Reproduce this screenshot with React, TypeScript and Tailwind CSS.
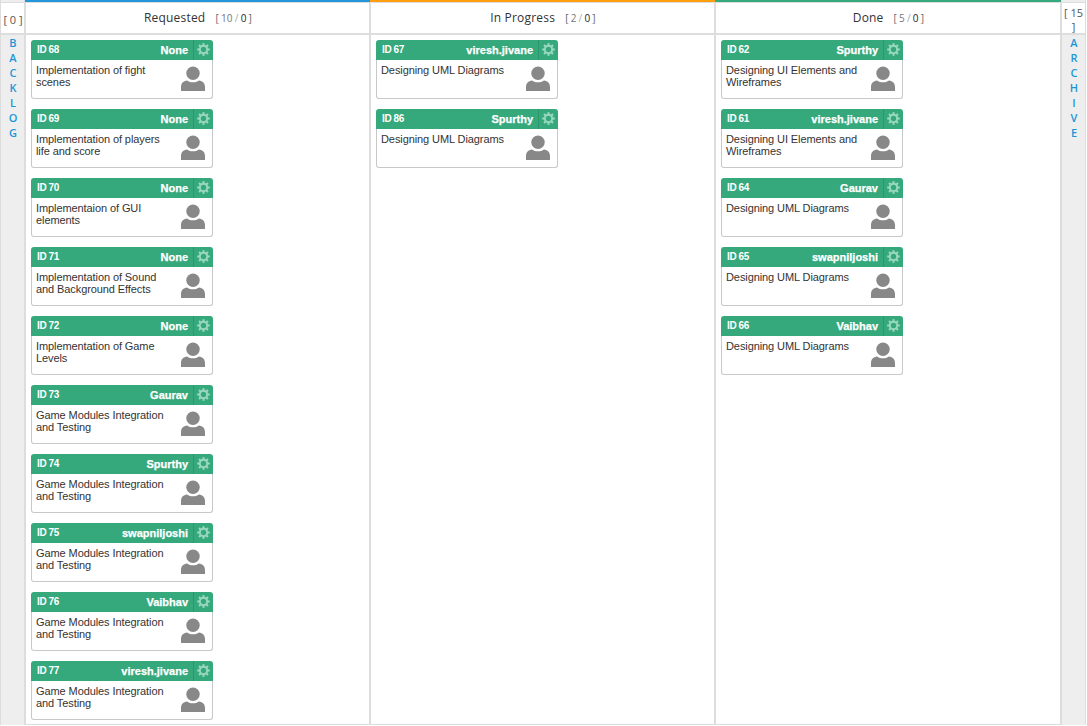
type Card = { id: number; owner: string; lines: string[] };

const testing = ["Game Modules Integration", "and Testing"];
const uml = ["Designing UML Diagrams"];
const ui = ["Designing UI Elements and", "Wireframes"];

const requested: Card[] = [
  { id: 68, owner: "None", lines: ["Implementation of fight", "scenes"] },
  { id: 69, owner: "None", lines: ["Implementation of players", "life and score"] },
  { id: 70, owner: "None", lines: ["Implementaion of GUI", "elements"] },
  { id: 71, owner: "None", lines: ["Implementation of Sound", "and Background Effects"] },
  { id: 72, owner: "None", lines: ["Implementation of Game", "Levels"] },
  { id: 73, owner: "Gaurav", lines: testing },
  { id: 74, owner: "Spurthy", lines: testing },
  { id: 75, owner: "swapniljoshi", lines: testing },
  { id: 76, owner: "Vaibhav", lines: testing },
  { id: 77, owner: "viresh.jivane", lines: testing },
];
const inProgress: Card[] = [
  { id: 67, owner: "viresh.jivane", lines: uml },
  { id: 86, owner: "Spurthy", lines: uml },
];
const done: Card[] = [
  { id: 62, owner: "Spurthy", lines: ui },
  { id: 61, owner: "viresh.jivane", lines: ui },
  { id: 64, owner: "Gaurav", lines: uml },
  { id: 65, owner: "swapniljoshi", lines: uml },
  { id: 66, owner: "Vaibhav", lines: uml },
];

const teeth = [0, 45, 90, 135, 180, 225, 270, 315];

function Gear() {
  return (
    <svg viewBox="-6.5 -6.5 13 13" className="h-[13px] w-[13px]" fill="none" stroke="#9ad8c0">
      <circle r="3.7" strokeWidth="2" />
      {teeth.map((a) => (
        <path key={a} d="M0 -4.2V-6.3" strokeWidth="2.1" transform={`rotate(${a})`} />
      ))}
    </svg>
  );
}

function Person() {
  return (
    <svg viewBox="0 0 24 26" className="mt-px h-[26px] w-6 shrink-0" fill="#888">
      <circle cx="12" cy="7.3" r="6.7" />
      <path d="M0 25V21C0 17 2.4 14.8 6 14.4C9.4 17 14.6 17 18 14.4C21.6 14.8 24 17 24 21V25Z" />
    </svg>
  );
}

function TaskCard({ card }: { card: Card }) {
  return (
    <article className="flex h-[59px] w-[182px] flex-col">
      <header className="flex h-5 shrink-0 rounded-t-[3px] bg-[#35a87c] font-bold text-white">
        <span className="pl-1.5 text-[10px] leading-[20px] tracking-[-0.4px]">ID {card.id}</span>
        <span className="ml-auto pr-[5px] text-[11px] leading-[20px] [-webkit-text-stroke:0.25px_white]">{card.owner}</span>
        <span className="flex w-5 justify-center border-l border-[#2c966d] pt-[2.5px] pr-px">
          <Gear />
        </span>
      </header>
      <div className="flex h-[39px] justify-between rounded-b-[3px] border border-t-0 border-[#c8c8c8] bg-white pt-[5px] pr-[7px] pl-1">
        <p className="-mt-px text-[11px] leading-[12px] tracking-[-0.09px] whitespace-nowrap text-[#333]">
          {card.lines.map((line) => (
            <span key={line} className="block">{line}</span>
          ))}
        </p>
        <Person />
      </div>
    </article>
  );
}

function Column({ title, used, bar, cards }: { title: string; used: number; bar: string; cards: Card[] }) {
  return (
    <section className="flex flex-col border-r-2 border-[#ddd]">
      <div className={`-mr-px -ml-px h-[2px] shrink-0 ${bar}`} />
      <header className="flex h-[33px] shrink-0 items-center justify-center border-t border-b-2 border-[#ddd] pl-px font-['Open_Sans',sans-serif] text-[#333]">
        <h2 className="text-[12px] leading-[16px] tracking-[0.2px]">{title}</h2>
        <span className="ml-2.5 flex gap-[2px] text-[10px] leading-[16px] tracking-[0.2px] text-[#666]">
          <span>[</span>
          <span className="text-[#777]">{used}</span>
          <span className="text-[#aaa]">/</span>
          <span className="text-[#222]">0</span>
          <span>]</span>
        </span>
      </header>
      <div className="flex flex-1 flex-col gap-2.5 p-[5px]">
        {cards.map((card) => (
          <TaskCard key={card.id} card={card} />
        ))}
      </div>
    </section>
  );
}

function Side({ count, label, edge, pad }: { count: string[]; label: string; edge: string; pad: string }) {
  return (
    <aside className={`flex flex-col border-[#ddd] font-['Open_Sans',sans-serif] ${edge}`}>
      <div className="h-[2px] shrink-0 bg-[#eee]" />
      <div className={`flex h-[33px] shrink-0 flex-col items-center justify-center border-t border-b-2 border-[#ddd] text-[11px] leading-[14px] whitespace-nowrap text-[#555] ${pad}`}>
        {count.map((c) => (
          <span key={c}>{c}</span>
        ))}
      </div>
      <div className="flex flex-1 flex-col items-center bg-[#eee] pl-px text-[11px] leading-[15px] font-semibold text-[#1d96d8]">
        {label.split("").map((c, i) => (
          <span key={i}>{c}</span>
        ))}
      </div>
    </aside>
  );
}

export default function App() {
  return (
    <div className="h-[726px] w-[1087px] overflow-hidden bg-white font-['Liberation_Sans',Arial,sans-serif]">
      <main className="grid h-[725px] w-[1086px] grid-cols-[26px_345px_345px_346px_24px] border-b border-[#ddd]">
        <Side count={["[ 0 ]"]} label="BACKLOG" edge="border-l border-r-2" pad="pt-1 pl-px" />
        <Column title="Requested" used={10} bar="bg-[#2196d8]" cards={requested} />
        <Column title="In Progress" used={2} bar="bg-[#ff9f0f]" cards={inProgress} />
        <Column title="Done" used={5} bar="bg-[#35a87c]" cards={done} />
        <Side count={["[ 15", "]"]} label="ARCHIVE" edge="border-r" pad="pt-1" />
      </main>
    </div>
  );
}
